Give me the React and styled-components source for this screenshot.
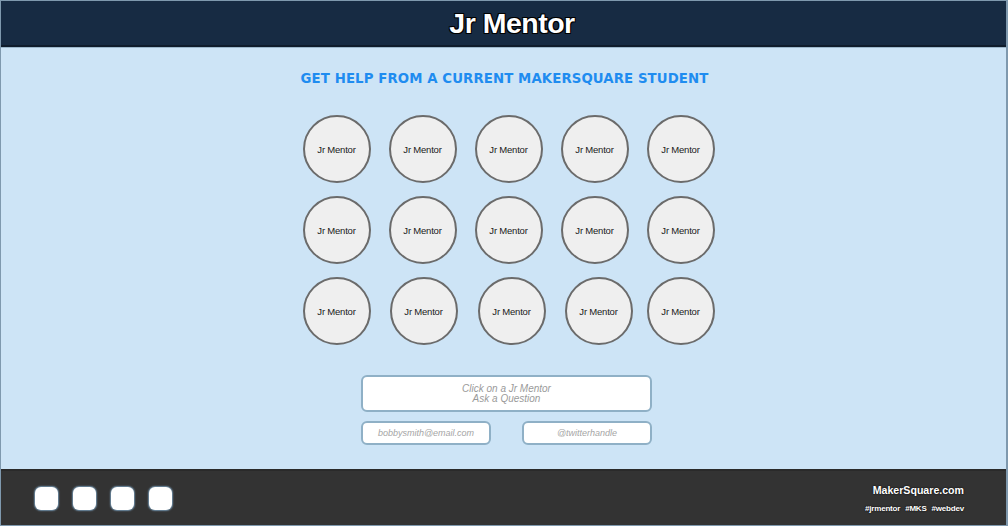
import React from 'react'
import styled, { createGlobalStyle } from 'styled-components'

const GlobalStyle = createGlobalStyle`
  html, body {
    margin: 0;
    padding: 0;
    background: #cde4f6;
  }
  * {
    box-sizing: border-box;
  }
`

const Page = styled.div`
  width: 1008px;
  height: 526px;
  display: flex;
  flex-direction: column;
  border: 1px solid #7f99ae;
  border-right-width: 2px;
  font-family: "Liberation Sans", Arial, sans-serif;
`

const Header = styled.header`
  height: 46px;
  background: #172b43;
  border-bottom: 2px solid #0f1c2c;
  display: flex;
  align-items: center;
  justify-content: center;
  padding-left: 17px;
`

const Title = styled.h1`
  margin: 0;
  color: #fff;
  font-size: 28.5px;
  font-weight: bold;
  letter-spacing: -0.5px;
  text-shadow: -1px -1px 0 #000, 1px -1px 0 #000, -1px 1px 0 #000, 1px 1px 0 #000;
`

const Main = styled.main`
  flex: 1;
  background: #cde4f6;
  border-top: 1px solid #9db8cc;
  display: flex;
  flex-direction: column;
  align-items: center;
  padding-top: 23px;
`

const Heading = styled.h2`
  margin: 0 0 29px 2px;
  color: #1f8cf0;
  font-family: "DejaVu Sans", Verdana, sans-serif;
  font-size: 13.3px;
  font-weight: bold;
  letter-spacing: 0.1px;
`

const Grid = styled.div`
  display: grid;
  grid-template-columns: repeat(5, 68px);
  column-gap: 18px;
  row-gap: 13px;
  margin-left: 10px;
`

const Mentor = styled.button`
  width: 68px;
  height: 68px;
  border-radius: 50%;
  border: 2px solid #6b6b6b;
  background: #efefef;
  color: #1a1a1a;
  font-family: "Liberation Sans", Arial, sans-serif;
  font-size: 9.5px;
  letter-spacing: -0.2px;
  padding: 0;
  display: flex;
  align-items: center;
  justify-content: center;
  transform: translateX(${p => p.$shift || 0}px);
`

const Form = styled.div`
  margin-top: 30px;
  margin-left: 6px;
  width: 291px;
  display: flex;
  flex-direction: column;
  gap: 9px;
`

const Question = styled.div`
  height: 37px;
  background: #fff;
  border: 2px solid #8fb0c6;
  border-radius: 6px;
  display: flex;
  flex-direction: column;
  align-items: center;
  justify-content: center;
  color: #9a9a9a;
  font-style: italic;
  font-size: 10px;
  line-height: 10px;
`

const InputRow = styled.div`
  display: flex;
  justify-content: space-between;
`

const SmallInput = styled.div`
  width: 130px;
  height: 24px;
  background: #fff;
  border: 2px solid #8fb0c6;
  border-radius: 6px;
  display: flex;
  align-items: center;
  justify-content: center;
  color: #a5a5a5;
  font-style: italic;
  font-size: 9px;
`

const Footer = styled.footer`
  height: 56px;
  background: #333;
  border-top: 2px solid #2a2a2a;
  display: flex;
  align-items: center;
  justify-content: space-between;
  padding: 0 42px 0 34px;
`

const Squares = styled.div`
  display: flex;
  gap: 15px;
  margin-top: 1px;
`

const Square = styled.div`
  width: 23px;
  height: 23px;
  background: #fff;
  border-radius: 6px;
  box-shadow: 0 0 1.5px 1px #6f8ea6;
`

const Brand = styled.div`
  display: flex;
  flex-direction: column;
  align-items: flex-end;
  gap: 8px;
  color: #fff;
  text-shadow: 0 0 2px #000;
`

const Site = styled.div`
  font-size: 10.6px;
  font-weight: bold;
`

const Tags = styled.div`
  font-size: 8px;
  font-weight: bold;
  letter-spacing: -0.2px;
  word-spacing: 3px;
`

// third row sits a few pixels right of the first two
const shifts = [
  [0, 0, 0, 0, 0],
  [0, 0, 0, 0, 0],
  [0, 1, 3, 4, 0],
]

export default function App() {
  return (
    <>
      <GlobalStyle />
      <Page>
        <Header>
          <Title>Jr Mentor</Title>
        </Header>
        <Main>
          <Heading>GET HELP FROM A CURRENT MAKERSQUARE STUDENT</Heading>
          <Grid>
            {shifts.map((row, r) =>
              row.map((shift, c) => (
                <Mentor key={`${r}-${c}`} $shift={shift}>
                  Jr Mentor
                </Mentor>
              ))
            )}
          </Grid>
          <Form>
            <Question>
              <span>Click on a Jr Mentor</span>
              <span>Ask a Question</span>
            </Question>
            <InputRow>
              <SmallInput>bobbysmith@email.com</SmallInput>
              <SmallInput>@twitterhandle</SmallInput>
            </InputRow>
          </Form>
        </Main>
        <Footer>
          <Squares>
            <Square />
            <Square />
            <Square />
            <Square />
          </Squares>
          <Brand>
            <Site>MakerSquare.com</Site>
            <Tags>#jrmentor #MKS #webdev</Tags>
          </Brand>
        </Footer>
      </Page>
    </>
  )
}
